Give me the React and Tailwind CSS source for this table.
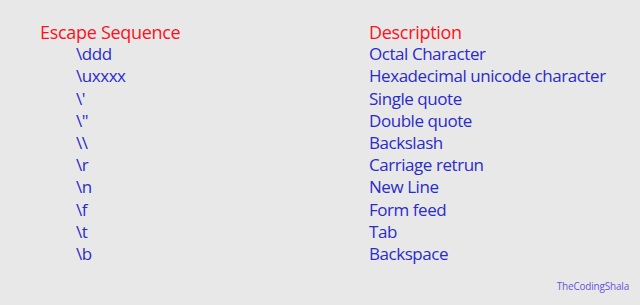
const rows = [
  ['\\ddd', 'Octal Character'],
  ['\\uxxxx', 'Hexadecimal unicode character'],
  ["\\'", 'Single quote'],
  ['\\"', 'Double quote'],
  ['\\\\', 'Backslash'],
  ['\\r', 'Carriage retrun'],
  ['\\n', 'New Line'],
  ['\\f', 'Form feed'],
  ['\\t', 'Tab'],
  ['\\b', 'Backspace'],
]

export default function App() {
  return (
    <div className="w-[640px] h-[305px] bg-[#e8e8e8] overflow-hidden font-['Open_Sans',sans-serif]">
      <div className="pt-[21px] pl-[40px]">
        <div className="grid grid-cols-[329px_1fr] text-[17px] leading-[22.2px] tracking-[-0.45px]">
          <div className="text-[#ff1020] text-[18px] tracking-[-0.3px]">Escape Sequence</div>
          <div className="text-[#ff1020] text-[18px] tracking-[-0.3px]">Description</div>
          {rows.map(([seq, desc]) => (
            <div key={seq} className="contents">
              <div className="pl-[36px] text-[#2b2bcc]">{seq}</div>
              <div className="text-[#2b2bcc]">{desc}</div>
            </div>
          ))}
        </div>
      </div>
      <div className="flex justify-end pr-[11px] mt-[14px]">
        <span className="text-[10px] tracking-[-0.2px] text-[#6655dd]">TheCodingShala</span>
      </div>
    </div>
  )
}
